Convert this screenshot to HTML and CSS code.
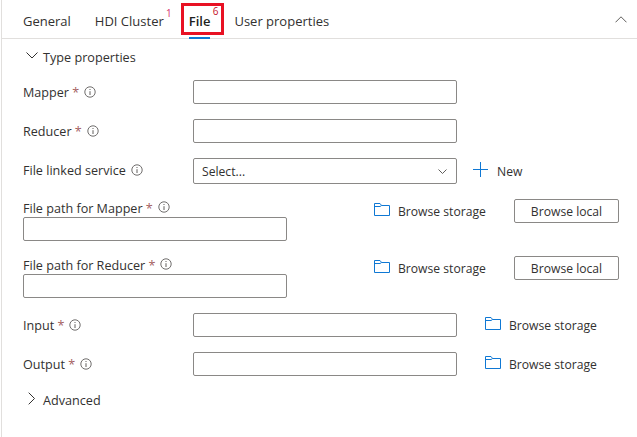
FILE: index.html
```html
<!DOCTYPE html>
<html lang="en">
<head>
<meta charset="utf-8">
<title>File</title>
<link rel="stylesheet" href="styles.css">
</head>
<body>
<svg class="defs" width="0" height="0" aria-hidden="true">
  <symbol id="info" viewBox="0 0 12 12">
    <circle cx="6" cy="6" r="5.2" fill="none" stroke="#605e5c" stroke-width="0.9"/>
    <path d="M6 5.200V9" fill="none" stroke="#605e5c" stroke-width="1"/>
    <rect x="5.500" y="3" width="1" height="1" fill="#605e5c"/>
  </symbol>
  <symbol id="folder" viewBox="0 0 16 13">
    <path d="M.5 12.500V.5h5.500l1.600 2h7.900v10zM.5 3.500h5.500l1.600-1" fill="none" stroke="#0f78d4" stroke-width="1"/>
  </symbol>
</svg>
<main class="panel">
  <nav class="tabs">
    <span class="tab">General</span>
    <span class="tab tab-hdi">HDI Cluster<sup class="badge badge-pink">1</sup></span>
    <span class="tab tab-active">File<sup class="badge badge-red">6</sup></span>
    <span class="tab tab-user">User properties</span>
    <svg class="collapse" width="12" height="7" viewBox="0 0 12 7"><path d="M.5 6.300 6 .8l5.500 5.500" fill="none" stroke="#605e5c" stroke-width="1"/></svg>
    <span class="highlight"></span>
  </nav>
  <section class="content">
    <h2 class="section-head">
      <svg class="chev" width="12" height="7" viewBox="0 0 12 7"><path d="M.5.500 6 6 11.500.500" fill="none" stroke="#323130" stroke-width="1"/></svg>
      Type properties
    </h2>
    <div class="row row-mapper">
      <label class="label">Mapper <i class="req">*</i><svg class="info"><use href="#info"/></svg></label>
      <span class="input"></span>
    </div>
    <div class="row row-reducer">
      <label class="label">Reducer <i class="req">*</i><svg class="info"><use href="#info"/></svg></label>
      <span class="input"></span>
    </div>
    <div class="row row-linked">
      <label class="label label-linked">File linked service<svg class="info"><use href="#info"/></svg></label>
      <span class="input select">Select...
        <svg class="select-chev" width="9" height="5" viewBox="0 0 9 5"><path d="M.5.500 4.500 4.500 8.500.500" fill="none" stroke="#605e5c" stroke-width="1"/></svg>
      </span>
      <span class="new">
        <svg class="plus" width="15" height="15" viewBox="0 0 15 15"><path d="M7.500 0v15M0 7.500h15" stroke="#0f78d4" stroke-width="1"/></svg>
        New
      </span>
    </div>
    <div class="path-row path-mapper">
      <div class="path-field">
        <label class="label-stack">File path for Mapper <i class="req">*</i><svg class="info"><use href="#info"/></svg></label>
        <span class="input"></span>
      </div>
      <span class="browse browse-path"><svg class="folder"><use href="#folder"/></svg>Browse storage</span>
      <span class="btn">Browse local</span>
    </div>
    <div class="path-row path-reducer">
      <div class="path-field">
        <label class="label-stack">File path for Reducer <i class="req">*</i><svg class="info"><use href="#info"/></svg></label>
        <span class="input"></span>
      </div>
      <span class="browse browse-path"><svg class="folder"><use href="#folder"/></svg>Browse storage</span>
      <span class="btn">Browse local</span>
    </div>
    <div class="row row-input">
      <label class="label">Input <i class="req">*</i><svg class="info"><use href="#info"/></svg></label>
      <span class="input"></span>
      <span class="browse browse-inline"><svg class="folder"><use href="#folder"/></svg>Browse storage</span>
    </div>
    <div class="row row-output">
      <label class="label">Output <i class="req">*</i><svg class="info"><use href="#info"/></svg></label>
      <span class="input"></span>
      <span class="browse browse-inline"><svg class="folder"><use href="#folder"/></svg>Browse storage</span>
    </div>
    <h2 class="section-head section-adv">
      <svg class="chev chev-right" width="8" height="13" viewBox="0 0 8 13"><path d="M.7.700 6.500 6.500.7 12.300" fill="none" stroke="#323130" stroke-width="1"/></svg>
      Advanced
    </h2>
  </section>
</main>
</body>
</html>
```
FILE: styles.css
```css
* { box-sizing: border-box; }
html, body { margin: 0; padding: 0; background: #fff; }
body {
  width: 637px;
  height: 437px;
  overflow: hidden;
  font-family: "Open Sans", "Noto Sans", "Liberation Sans", sans-serif;
  font-size: 12.150px;
  color: #323130;
}
.defs { position: absolute; }
.panel {
  margin-left: 1px;
  width: 636px;
  height: 437px;
  border-left: 1px solid #e1dfdd;
}
.tabs {
  position: relative;
  display: flex;
  height: 39px;
  padding-left: 21px;
  border-bottom: 1px solid #e1dfdd;
}
.tab {
  position: relative;
  height: 38px;
  line-height: 43px;
  font-size: 13px;
  white-space: nowrap;
}
.tab-hdi { margin-left: 24px; }
.tab-active {
  margin-left: 25px;
  font-weight: 600;
  color: #201f1e;
}
.tab-active::after {
  content: "";
  position: absolute;
  left: 0;
  right: 0;
  bottom: -1px;
  height: 2px;
  background: #0f78d4;
}
.tab-user { margin-left: 24px; }
.badge {
  position: absolute;
  top: 7px;
  font-size: 10px;
  line-height: 12px;
  font-weight: 400;
}
.tab-hdi .badge { right: -8px; }
.tab-active .badge { right: -8px; top: 5px; }
.badge-pink { color: #d6336c; }
.badge-red { color: #c50f1f; }
.collapse { position: absolute; right: 10px; top: 16px; }
.highlight {
  position: absolute;
  left: 179px;
  top: 3px;
  width: 43px;
  height: 32px;
  border: 3px solid #e81123;
}
.content { padding-left: 21px; }
.section-head {
  display: flex;
  align-items: center;
  margin: 8px 0 0;
  font-size: 12.650px;
  font-weight: 500;
  height: 20px;
  color: #323130;
}
.chev { margin-left: 3px; margin-right: 5px; margin-top: -3px; flex: none; }
.chev-right { margin-left: 5px; margin-right: 7px; }
.row { display: flex; align-items: center; height: 24px; }
.row-mapper { margin-top: 13px; }
.row-reducer { margin-top: 15px; }
.row-linked { margin-top: 15px; height: 26px; }
.row-input { margin-top: 15px; }
.row-output { margin-top: 15px; }
.label {
  width: 170px;
  flex: none;
  font-size: 12.600px;
  font-weight: 500;
  display: flex;
  align-items: center;
  white-space: pre;
  margin-top: 1px;
}
.label-linked { margin-top: -1px; }
.label-stack {
  display: flex;
  align-items: center;
  height: 18px;
  font-size: 12.600px;
  font-weight: 500;
  white-space: pre;
}
.req {
  font-style: normal;
  font-weight: 400;
  color: #a4605f;
}
.info { width: 12px; height: 12px; margin-left: 5px; margin-top: -2px; flex: none; }
.input {
  display: block;
  width: 264px;
  height: 24px;
  flex: none;
  border: 1px solid #8a8886;
  border-radius: 2px;
  background: #fff;
}
.select {
  position: relative;
  height: 26px;
  line-height: 25px;
  padding-left: 8px;
}
.select-chev { position: absolute; right: 9px; top: 10px; }
.new {
  display: flex;
  align-items: center;
  gap: 9px;
  margin-left: 16px;
}
.plus { margin-top: -4px; }
.path-row { display: flex; align-items: flex-start; }
.path-mapper { margin-top: 15px; }
.path-reducer { margin-top: 15px; }
.path-field { width: 264px; flex: none; }
.browse {
  display: flex;
  align-items: center;
  white-space: nowrap;
}
.folder { width: 16px; height: 13px; margin-right: 8px; flex: none; margin-top: -3px; }
.browse-path { margin-left: 87px; height: 24px; width: 140px; flex: none; }
.browse-inline { margin-left: 28px; }
.btn {
  display: flex;
  align-items: center;
  justify-content: center;
  width: 105px;
  height: 24px;
  flex: none;
  border: 1px solid #8a8886;
  border-radius: 2px;
}
.section-adv { margin-top: 14px; }
```
